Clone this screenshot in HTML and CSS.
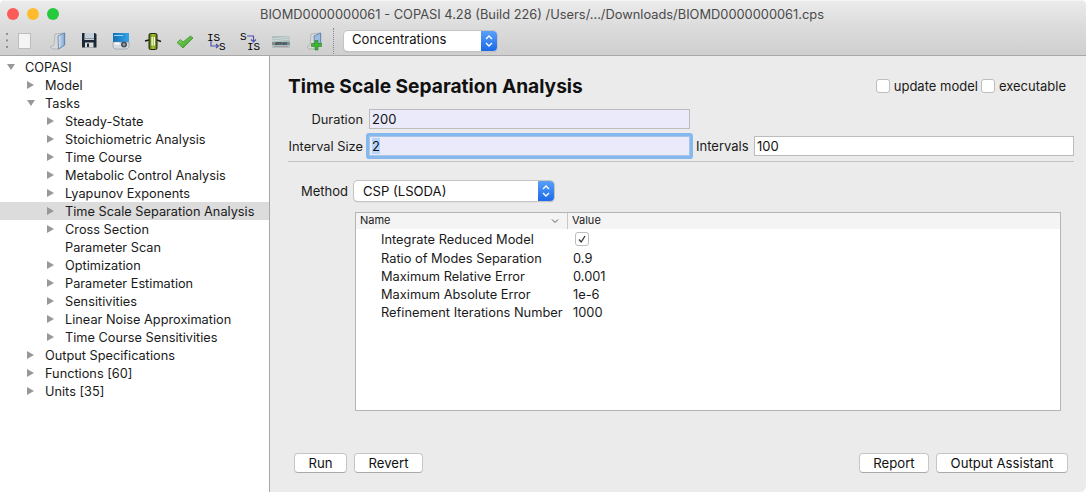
FILE: index.html
```html
<!DOCTYPE html>
<html lang="en">
<head>
  <meta charset="UTF-8" />
  <title>COPASI</title>
  <link rel="stylesheet" href="styles.css">
</head>
<body>
  <div class="janela">
    <!-- Barra de titulo -->
    <div class="titulo">
      <div class="semaforo">
        <span class="luz vermelho"></span>
        <span class="luz amarelo"></span>
        <span class="luz verde"></span>
      </div>
      <div class="tituloTexto">BIOMD0000000061 - COPASI 4.28 (Build 226) /Users/.../Downloads/BIOMD0000000061.cps</div>
    </div>

    <!-- Barra de ferramentas -->
    <div class="ferramentas">
      <span class="alca"></span>
      <svg class="icone" viewBox="0 0 24 24"><rect x="5.500" y="4.500" width="12" height="15" fill="#f4f4f4" stroke="#bdbdbd"/></svg>
      <svg class="icone" viewBox="0 0 24 24">
        <defs><linearGradient id="pasta" x1="0" y1="0" x2="1" y2="0"><stop offset="0" stop-color="#dfe6ee"/><stop offset="1" stop-color="#7fa6d4"/></linearGradient></defs>
        <path d="M5 18 L9 16 L10 5 L20 4 V16 L14 20 L8 20 Z" fill="#d8d8d8" stroke="#a8a8a8" stroke-width="0.700"/>
        <path d="M13 7 L19.500 4 V16 L13.500 20 Z" fill="url(#pasta)" stroke="#4f7fb5" stroke-width="0.800"/>
      </svg>
      <svg class="icone" viewBox="0 0 24 24">
        <path d="M5 4 H18 L19.500 5.500 V18.500 H5 Z" fill="#1c2836"/>
        <rect x="7.500" y="4" width="9.500" height="7" fill="#c6ced8"/>
        <rect x="7.500" y="9" width="9.500" height="1" fill="#8b98a8"/>
        <rect x="8" y="13.500" width="8.500" height="5" fill="#dcdcdc"/>
        <rect x="10" y="14.500" width="2" height="3.500" fill="#1c2836"/>
      </svg>
      <svg class="icone" viewBox="0 0 24 24">
        <defs><linearGradient id="foto" x1="0" y1="0" x2="1" y2="0"><stop offset="0" stop-color="#0f6fb8"/><stop offset="1" stop-color="#35a4e8"/></linearGradient></defs>
        <rect x="4" y="4" width="16" height="9" fill="url(#foto)"/>
        <rect x="5" y="6" width="9" height="1" fill="#9fd4f5"/>
        <path d="M4 13 H20 V18 L18 20 H6 L4 18 Z" fill="#d6dadf" stroke="#7b8590" stroke-width="0.500"/>
        <rect x="5.500" y="13.500" width="5" height="2" fill="#fff"/>
        <circle cx="15" cy="15.500" r="3" fill="#4a5560"/>
        <circle cx="15" cy="15.500" r="1.200" fill="#9aa6b2"/>
      </svg>
      <svg class="icone" viewBox="0 0 24 24">
        <defs><linearGradient id="pilha" x1="0" y1="0" x2="1" y2="0"><stop offset="0" stop-color="#4d6412"/><stop offset="0.500" stop-color="#a8c830"/><stop offset="1" stop-color="#5a7218"/></linearGradient></defs>
        <path d="M4 12 L8 11 M16 11 L20 12.500" stroke="#1c1c1c" stroke-width="1.600"/>
        <rect x="8" y="4.500" width="8" height="16" rx="1.500" fill="url(#pilha)" stroke="#20280c"/>
        <rect x="10.500" y="8" width="1.200" height="8.500" fill="#fff"/>
        <rect x="12.800" y="8" width="1.200" height="8.500" fill="#fff"/>
      </svg>
      <svg class="icone" viewBox="0 0 24 24">
        <defs><linearGradient id="certo" x1="0" y1="0" x2="1" y2="1"><stop offset="0" stop-color="#8ede5c"/><stop offset="1" stop-color="#2f9a2a"/></linearGradient></defs>
        <path d="M4 13.500 L7.500 10.500 L10 13 L17.500 7 L20 9 L10 19 Z" fill="url(#certo)" stroke="#3a8a2c" stroke-width="0.700"/>
      </svg>
      <span class="iconeTexto"><span class="linha1">IS</span><svg class="seta" viewBox="0 0 10 8"><path d="M1 0 V5 H8 M6 3 L8.500 5 L6 7" fill="none" stroke="#5050b0" stroke-width="1.200"/></svg><span class="linha2">S</span></span>
      <span class="iconeTexto inverso"><span class="linha1">S</span><svg class="seta" viewBox="0 0 10 8"><path d="M0 1 H6.500 V7 M4 4.500 L6.500 7 L9 4.500" fill="none" stroke="#5050b0" stroke-width="1.200"/></svg><span class="linha2">IS</span></span>
      <svg class="icone" viewBox="0 0 24 24">
        <rect x="3" y="7" width="18" height="12" fill="#aebfbd"/>
        <path d="M3 10 L21 8 M3 12 L21 10" stroke="#d6e0de" stroke-width="0.800"/>
        <rect x="3" y="13" width="18" height="3" fill="#7f9296"/>
        <text x="12" y="15.500" text-anchor="middle" class="textoMini">AERIAN</text>
        <path d="M5 17.500 H19" stroke="#b08a9a" stroke-width="0.800"/>
      </svg>
      <svg class="icone" viewBox="0 0 24 24">
        <path d="M6 18 L9 16 L10 5 L20 4 V15 L14 20 L8 20 Z" fill="#d8d8d8" stroke="#a8a8a8" stroke-width="0.700"/>
        <path d="M13 7 L19.500 4 V14 L13.500 17 Z" fill="#9dbde0" stroke="#4f7fb5" stroke-width="0.800"/>
        <path d="M10.500 14.500 H14 V11.500 H17 V14.500 H20.500 V17.500 H17 V21 H14 V17.500 H10.500 Z" fill="#3fb535" stroke="#2a7d24" stroke-width="0.600"/>
      </svg>
      <span class="separador"></span>
      <div class="combo comboConc">
        <span class="comboTexto">Concentrations</span>
        <span class="comboSeta"><svg viewBox="0 0 16 20"><path d="M5 8 L8 5 L11 8 M5 12 L8 15 L11 12" fill="none" stroke="#fff" stroke-width="1.400"/></svg></span>
      </div>
    </div>

    <div class="corpo">
      <!-- Arvore lateral -->
      <div class="arvore">
        <div class="item"><span class="aberto"></span>COPASI</div>
        <div class="item n1"><span class="fechado"></span>Model</div>
        <div class="item n1"><span class="aberto"></span>Tasks</div>
        <div class="item n2"><span class="fechado"></span>Steady-State</div>
        <div class="item n2"><span class="fechado"></span>Stoichiometric Analysis</div>
        <div class="item n2"><span class="fechado"></span>Time Course</div>
        <div class="item n2"><span class="fechado"></span>Metabolic Control Analysis</div>
        <div class="item n2"><span class="fechado"></span>Lyapunov Exponents</div>
        <div class="item n2 selecionado"><span class="fechado"></span>Time Scale Separation Analysis</div>
        <div class="item n2"><span class="fechado"></span>Cross Section</div>
        <div class="item n2"><span class="vazio"></span>Parameter Scan</div>
        <div class="item n2"><span class="fechado"></span>Optimization</div>
        <div class="item n2"><span class="fechado"></span>Parameter Estimation</div>
        <div class="item n2"><span class="fechado"></span>Sensitivities</div>
        <div class="item n2"><span class="fechado"></span>Linear Noise Approximation</div>
        <div class="item n2"><span class="fechado"></span>Time Course Sensitivities</div>
        <div class="item n1"><span class="fechado"></span>Output Specifications</div>
        <div class="item n1"><span class="fechado"></span>Functions [60]</div>
        <div class="item n1"><span class="fechado"></span>Units [35]</div>
      </div>

      <!-- Painel da tarefa -->
      <div class="painel">
        <div class="cabecalho">
          <h1>Time Scale Separation Analysis</h1>
          <div class="opcoes">
            <span class="caixa"></span><span class="opcaoTexto">update model</span>
            <span class="caixa"></span><span class="opcaoTexto">executable</span>
          </div>
        </div>

        <div class="linhaCampo linhaDuracao">
          <span class="rotulo">Duration</span>
          <div class="campo azul curto">200</div>
        </div>
        <div class="linhaCampo linhaIntervalo">
          <span class="rotulo">Interval Size</span>
          <div class="campo azul curto foco"><span class="marcado">2</span></div>
          <span class="rotuloIntervalos">Intervals</span>
          <div class="campo longo">100</div>
        </div>
        <div class="divisor"></div>

        <div class="linhaMetodo">
          <span class="rotuloMetodo">Method</span>
          <div class="combo comboMetodo">
            <span class="comboTexto">CSP (LSODA)</span>
            <span class="comboSeta"><svg viewBox="0 0 16 20"><path d="M5 8 L8 5 L11 8 M5 12 L8 15 L11 12" fill="none" stroke="#fff" stroke-width="1.400"/></svg></span>
          </div>
        </div>

        <div class="tabela">
          <div class="tabelaTopo">
            <div class="colNome">Name<svg class="ordem" viewBox="0 0 8 6"><path d="M1 1.500 L4 4.500 L7 1.500" fill="none" stroke="#555" stroke-width="1"/></svg></div>
            <div class="colValor">Value</div>
          </div>
          <div class="tabelaLinha primeira"><span class="nome">Integrate Reduced Model</span><span class="valor"><span class="check"><svg viewBox="0 0 12 12"><path d="M3 6.500 L5.200 9 L9 3" fill="none" stroke="#333" stroke-width="1.300"/></svg></span></span></div>
          <div class="tabelaLinha"><span class="nome">Ratio of Modes Separation</span><span class="valor">0.9</span></div>
          <div class="tabelaLinha"><span class="nome">Maximum Relative Error</span><span class="valor">0.001</span></div>
          <div class="tabelaLinha"><span class="nome">Maximum Absolute Error</span><span class="valor">1e-6</span></div>
          <div class="tabelaLinha"><span class="nome">Refinement Iterations Number</span><span class="valor">1000</span></div>
        </div>

        <div class="botoes">
          <div class="grupo">
            <button class="btnRun">Run</button>
            <button class="btnRevert">Revert</button>
          </div>
          <div class="grupo">
            <button class="btnReport">Report</button>
            <button class="btnOutput">Output Assistant</button>
          </div>
        </div>
      </div>
    </div>
  </div>
</body>
</html>
```

FILE: styles.css
```css
html, body {
  margin: 0;
  padding: 0;
}
body {
  width: 1086px;
  height: 492px;
  overflow: hidden;
  background-color: #fff;
  font-family: "Inter", "Liberation Sans", Arial, sans-serif;
  font-size: 13px;
  color: #1a1a1a;
}
.janela {
  width: 1086px;
  height: 492px;
  display: flex;
  flex-direction: column;
  background-color: #ebebeb;
  border-radius: 5px 5px 6px 6px;
  overflow: hidden;
}

/* Barra de titulo */
.titulo {
  height: 26px;
  display: flex;
  align-items: center;
  background: linear-gradient(#ebebeb, #dcdcdc);
  border-top: 1px solid #f5f5f5;
  box-sizing: border-box;
}
.semaforo {
  display: flex;
  gap: 8px;
  padding-left: 7px;
  width: 60px;
  flex-shrink: 0;
}
.luz {
  width: 12px;
  height: 12px;
  border-radius: 50%;
}
.vermelho { background-color: #fc5b57; }
.amarelo { background-color: #febb2e; }
.verde { background-color: #27c93f; }
.tituloTexto {
  margin-left: 193px;
  padding-top: 1px;
  font-size: 12.850px;
  color: #4a4a4a;
  white-space: nowrap;
}

/* Barra de ferramentas */
.ferramentas {
  height: 30px;
  display: flex;
  align-items: center;
  padding: 1px 0 0 6px;
  background: linear-gradient(#dcdcdc, #cfcfcf);
  border-bottom: 1px solid #a8a8a8;
  box-sizing: border-box;
}
.alca {
  width: 2px;
  height: 16px;
  margin-right: 5px;
  flex-shrink: 0;
  background-image: linear-gradient(#8c8c8c 2px, transparent 2px);
  background-size: 2px 6.500px;
}
.icone {
  width: 24px;
  height: 24px;
  margin-right: 8px;
  flex-shrink: 0;
}
.textoMini {
  font-family: "Liberation Sans", Arial, sans-serif;
  font-size: 3.200px;
  font-weight: 700;
  fill: #2c3a40;
}
.iconeTexto {
  position: relative;
  width: 24px;
  height: 24px;
  margin-right: 8px;
  flex-shrink: 0;
  font-family: "Liberation Mono", monospace;
  font-size: 11px;
  line-height: 12px;
  color: #000;
}
.linha1 {
  position: absolute;
  left: 2px;
  top: 3px;
}
.linha2 {
  position: absolute;
  left: 14px;
  top: 12px;
}
.seta {
  position: absolute;
  left: 4.500px;
  top: 12px;
  width: 10px;
  height: 8px;
}
.inverso .linha1 { left: 3px; top: 2px; }
.inverso .seta { left: 10px; top: 6px; }
.inverso .linha2 { left: 10px; top: 12px; }
.separador {
  width: 1px;
  height: 26px;
  margin: 0 10px 0 0;
  border-left: 1px dotted #888;
  box-sizing: border-box;
}
.combo {
  display: flex;
  align-items: stretch;
  box-sizing: border-box;
  background-color: #fff;
  border-radius: 4px;
  box-shadow: 0 0 0 1px #c4c4c4, 0 1px 1px #999;
  overflow: hidden;
}
.comboTexto {
  flex: 1;
  line-height: 17px;
  padding-left: 8px;
  color: #111;
  font-size: 13.100px;
}
.comboSeta {
  width: 16px;
  background: linear-gradient(#5aa0f8, #1a6ae8);
  display: flex;
}
.comboSeta svg {
  width: 16px;
  height: 20px;
}
.comboConc {
  width: 153px;
  height: 20px;
}

/* Corpo */
.corpo {
  flex: 1;
  display: flex;
  min-height: 0;
}
.arvore {
  width: 269px;
  flex-shrink: 0;
  padding-top: 2px;
  background-color: #fff;
  border-right: 1px solid #a8a8a8;
  font-size: 12.750px;
}
.item {
  height: 18px;
  line-height: 20px;
  white-space: nowrap;
  padding-left: 7px;
  color: #1a1a1a;
}
.n1 { padding-left: 27px; }
.n2 { padding-left: 47px; }
.selecionado { background-color: #dcdcdc; }
.item span {
  display: inline-block;
  width: 11px;
  margin-right: 7px;
  box-sizing: border-box;
}
.item .fechado {
  height: 0;
  vertical-align: 1px;
  border-left: 7px solid #989898;
  border-top: 4px solid transparent;
  border-bottom: 4px solid transparent;
}
.item .aberto {
  width: 8px;
  margin-right: 10px;
  height: 0;
  vertical-align: 2px;
  border-top: 6px solid #989898;
  border-left: 4px solid transparent;
  border-right: 4px solid transparent;
}

/* Painel */
.painel {
  flex: 1;
  padding: 0 12px 0 18px;
  display: flex;
  flex-direction: column;
  min-width: 0;
}
.cabecalho {
  display: flex;
  justify-content: space-between;
  align-items: center;
  height: 28px;
  margin-top: 16px;
}
h1 {
  margin: 0;
  font-size: 19.150px;
  font-weight: 700;
  color: #111;
}
.opcoes {
  display: flex;
  align-items: center;
  padding-right: 5px;
}
.caixa {
  width: 12px;
  height: 12px;
  background-color: #fff;
  border: 1px solid #bdbdbd;
  border-radius: 3px;
  margin-right: 4px;
}
.opcaoTexto { margin-right: 3px; }
.linhaCampo {
  display: flex;
  align-items: center;
  height: 20px;
}
.linhaDuracao { margin-top: 9px; }
.linhaIntervalo { margin-top: 7px; }
.rotulo {
  width: 75px;
  text-align: right;
  margin-right: 6px;
  white-space: nowrap;
  font-size: 12.850px;
}
.campo {
  height: 20px;
  line-height: 19px;
  box-sizing: border-box;
  border: 1px solid #bcbcbc;
  padding-left: 2px;
  background-color: #fff;
  color: #111;
}
.azul { background-color: #eaeafb; }
.curto { width: 321px; }
.longo { width: 320px; }
.foco {
  border-color: #a9c4e6;
  box-shadow: 0 0 0 3px #85b8ef;
  border-radius: 1px;
}
.marcado { background-color: #b5d5fc; }
.rotuloIntervalos {
  margin-left: 6px;
  width: 58px;
}
.divisor {
  height: 1px;
  width: 786px;
  background-color: #c4c4c4;
  margin-top: 5px;
}
.linhaMetodo {
  display: flex;
  align-items: center;
  margin-top: 19px;
}
.rotuloMetodo {
  margin-left: 13px;
  width: 53px;
}
.comboMetodo {
  width: 200px;
  height: 20px;
}
.comboMetodo .comboTexto {
  padding-left: 9px;
  line-height: 20px;
}
.tabela {
  margin-left: 67px;
  margin-top: 11px;
  width: 706px;
  height: 199px;
  box-sizing: border-box;
  background-color: #fff;
  border: 1px solid #b4b4b4;
  font-size: 12.850px;
}
.tabelaTopo {
  display: flex;
  height: 16px;
  line-height: 15px;
  background-color: #f4f4f4;
  font-size: 11px;
}
.colNome {
  width: 212px;
  box-sizing: border-box;
  padding-left: 4px;
  border-right: 1px solid #c8c8c8;
  position: relative;
}
.colValor { padding-left: 4px; }
.ordem {
  position: absolute;
  right: 8px;
  top: 5px;
  width: 8px;
  height: 6px;
}
.tabelaLinha {
  display: flex;
  height: 18px;
  line-height: 18px;
}
.primeira {
  height: 20.500px;
  line-height: 21px;
}
.nome {
  width: 192px;
  margin-left: 25px;
  white-space: nowrap;
}
.check {
  display: flex;
  width: 14px;
  height: 14px;
  margin: 3px 0 0 2px;
  box-sizing: border-box;
  border: 1px solid #bdbdbd;
  border-radius: 3px;
}
.check svg {
  width: 12px;
  height: 12px;
}

/* Botoes */
.botoes {
  display: flex;
  justify-content: space-between;
  margin-top: 42px;
  padding: 0 6px;
}
.grupo {
  display: flex;
  gap: 7px;
}
button {
  height: 20px;
  padding: 0;
  font-family: inherit;
  font-size: 13.150px;
  color: #111;
  background-color: #fff;
  border: 1px solid #c6c6c6;
  border-bottom-color: #aaa;
  border-radius: 4px;
}
.btnRun { width: 53px; }
.btnRevert { width: 69px; }
.btnReport { width: 70px; }
.btnOutput { width: 132px; }
```
